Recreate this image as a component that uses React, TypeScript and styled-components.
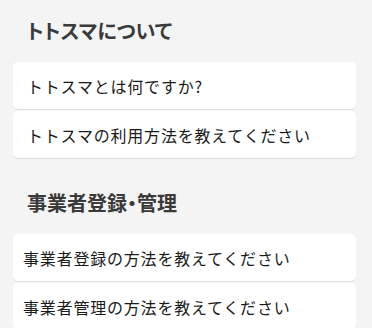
import React from "react";
import styled, { createGlobalStyle } from "styled-components";

const GlobalStyle = createGlobalStyle`
  body {
    margin: 0;
    background: #f4f4f4;
    font-family: "Noto Sans CJK JP", "Noto Sans", sans-serif;
  }
`;

const Page = styled.div`
  padding: 0 16px 0 13px;
`;

const Section = styled.section`
  display: flex;
  flex-direction: column;
`;

const Heading = styled.h2<{ $top: number }>`
  margin: ${props => props.$top}px 0 10px 14px;
  height: 44px;
  display: flex;
  align-items: center;
  font-size: 20px;
  font-weight: 700;
  color: #3a3a3a;
  font-feature-settings: "palt";
`;

const List = styled.ul`
  list-style: none;
  margin: 0;
  padding: 0;
  display: flex;
  flex-direction: column;
  gap: 2px;
`;

const Item = styled.li<{ $pad: number }>`
  height: 47px;
  display: flex;
  align-items: center;
  padding-left: ${props => props.$pad}px;
  background: #fff;
  border-radius: 5px;
  box-shadow: 0 1px 0 #dedede;
  font-size: 16px;
  letter-spacing: 0.8px;
  color: #1a1a1a;
`;

const sections = [
  {
    title: "トトスマについて",
    top: 8,
    pad: 14,
    items: ["トトスマとは何ですか?", "トトスマの利用方法を教えてください"],
  },
  {
    title: "事業者登録・管理",
    top: 22,
    pad: 10,
    items: ["事業者登録の方法を教えてください", "事業者管理の方法を教えてください"],
  },
];

const App: React.FC = () => {
  return (
    <>
      <GlobalStyle />
      <Page>
        {sections.map(section => (
          <Section key={section.title}>
            <Heading $top={section.top}>{section.title}</Heading>
            <List>
              {section.items.map(item => (
                <Item key={item} $pad={section.pad}>
                  {item}
                </Item>
              ))}
            </List>
          </Section>
        ))}
      </Page>
    </>
  );
};

export default App;
